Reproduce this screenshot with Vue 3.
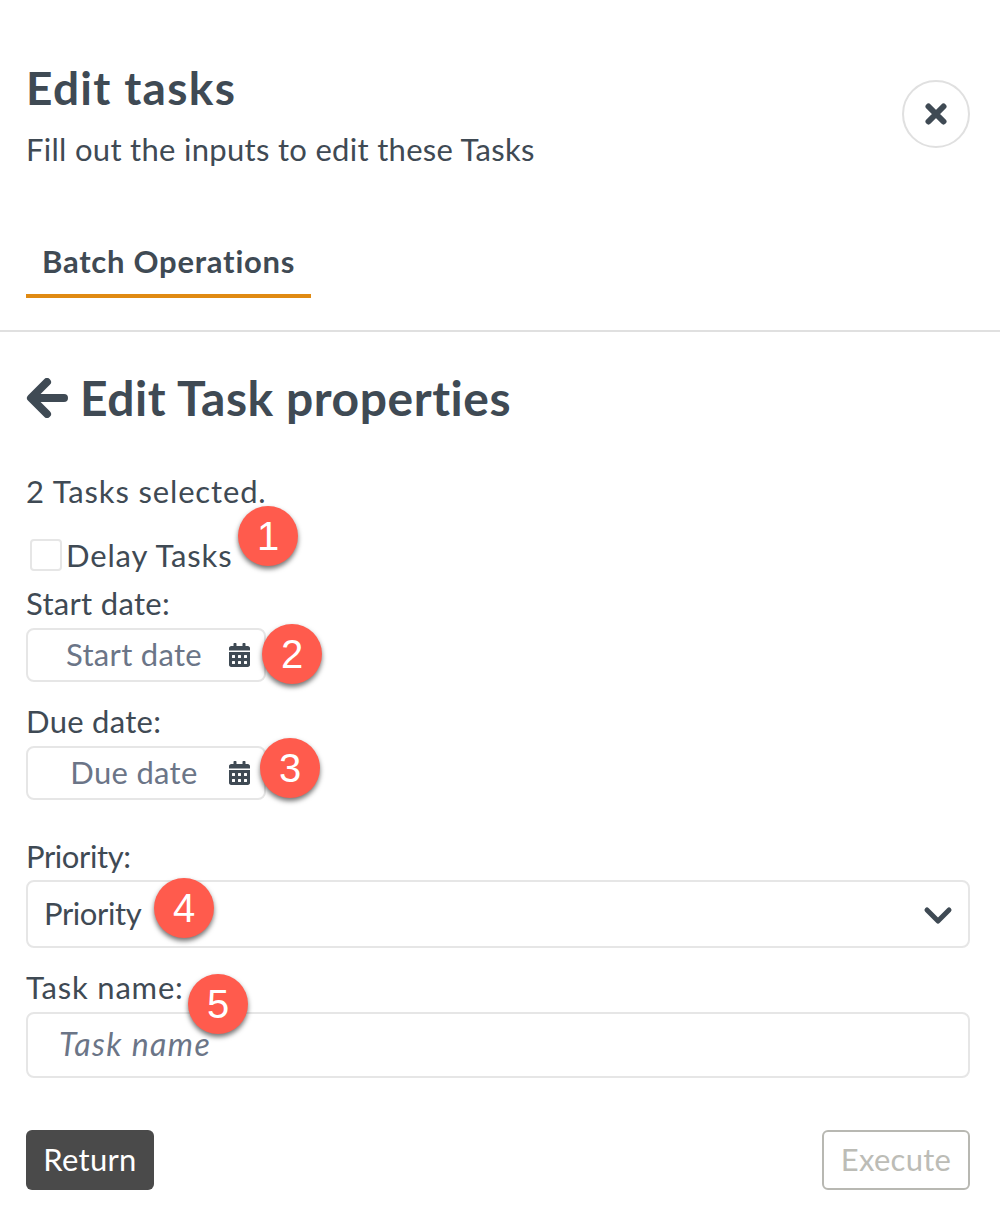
<template>
  <div class="panel">
    <header class="head">
      <div>
        <h1>Edit tasks</h1>
        <p class="sub">Fill out the inputs to edit these Tasks</p>
      </div>
      <button class="close" aria-label="Close">
        <svg width="22" height="22" viewBox="0 0 22 22">
          <path d="M3.5 3.5l15 15M18.5 3.5l-15 15" fill="none" stroke="#3f4a54" stroke-width="6" stroke-linecap="round" />
        </svg>
      </button>
    </header>

    <nav class="tabs">
      <a class="tab">Batch Operations</a>
    </nav>

    <main class="content">
      <h2>
        <svg width="42" height="40" viewBox="0 0 42 40">
          <path d="M38 20H6M21 4L5 20l16 16" fill="none" stroke="#3f4a54" stroke-width="8" stroke-linecap="round" stroke-linejoin="round" />
        </svg>
        Edit Task properties
      </h2>

      <p class="selected">2 Tasks selected.</p>

      <label class="check">
        <input type="checkbox" />
        <span>Delay Tasks</span>
      </label>

      <div class="field start">
        <label>Start date:</label>
        <div class="date">
          <input type="text" placeholder="Start date" />
          <svg width="21" height="24" viewBox="0 0 448 512">
            <path :d="calendar" fill="#3f4a54" />
          </svg>
        </div>
      </div>

      <div class="field due">
        <label>Due date:</label>
        <div class="date">
          <input type="text" placeholder="Due date" />
          <svg width="21" height="24" viewBox="0 0 448 512">
            <path :d="calendar" fill="#3f4a54" />
          </svg>
        </div>
      </div>

      <div class="field priority">
        <label>Priority:</label>
        <div class="select">
          <select>
            <option>Priority</option>
          </select>
          <svg width="30" height="20" viewBox="0 0 30 20">
            <path d="M4 4l11 11L26 4" fill="none" stroke="#3f4a54" stroke-width="5" stroke-linecap="round" stroke-linejoin="round" />
          </svg>
        </div>
      </div>

      <div class="field name">
        <label>Task name:</label>
        <input type="text" placeholder="Task name" />
      </div>

      <div class="actions">
        <button class="return">Return</button>
        <button class="execute" disabled>Execute</button>
      </div>
    </main>

    <span v-for="b in badges" :key="b.n" class="badge" :style="{ left: b.x + 'px', top: b.y + 'px' }">{{ b.n }}</span>
  </div>
</template>

<script setup>
const calendar = 'M0 464c0 26.5 21.5 48 48 48h352c26.5 0 48-21.5 48-48V192H0v272zm320-196c0-6.6 5.4-12 12-12h40c6.6 0 12 5.4 12 12v40c0 6.6-5.4 12-12 12h-40c-6.6 0-12-5.4-12-12v-40zm0 128c0-6.6 5.4-12 12-12h40c6.6 0 12 5.4 12 12v40c0 6.6-5.4 12-12 12h-40c-6.6 0-12-5.4-12-12v-40zM192 268c0-6.6 5.4-12 12-12h40c6.6 0 12 5.4 12 12v40c0 6.6-5.4 12-12 12h-40c-6.6 0-12-5.4-12-12v-40zm0 128c0-6.6 5.4-12 12-12h40c6.6 0 12 5.4 12 12v40c0 6.6-5.4 12-12 12h-40c-6.6 0-12-5.4-12-12v-40zM64 268c0-6.6 5.4-12 12-12h40c6.6 0 12 5.4 12 12v40c0 6.6-5.4 12-12 12H76c-6.6 0-12-5.4-12-12v-40zm0 128c0-6.6 5.4-12 12-12h40c6.6 0 12 5.4 12 12v40c0 6.6-5.4 12-12 12H76c-6.6 0-12-5.4-12-12v-40zM400 64h-48V16c0-8.8-7.2-16-16-16h-32c-8.8 0-16 7.2-16 16v48H160V16c0-8.8-7.2-16-16-16h-32c-8.8 0-16 7.2-16 16v48H48C21.5 64 0 85.5 0 112v48h448v-48c0-26.5-21.5-48-48-48z';

// callouts sit on top of the form, so they keep their own coordinates
const badges = [
  { n: 1, x: 238, y: 506 },
  { n: 2, x: 262, y: 624 },
  { n: 3, x: 260, y: 738 },
  { n: 4, x: 154, y: 878 },
  { n: 5, x: 188, y: 974 },
];
</script>

<style scoped>
.panel {
  position: relative;
  width: 1000px;
  height: 1220px;
  background: #fff;
  color: #3f4a54;
  font-family: Lato, "Open Sans", sans-serif;
  font-size: 31px;
  letter-spacing: 0.3px;
  font-variant-ligatures: none;
  overflow: hidden;
}

.head {
  display: flex;
  justify-content: space-between;
  align-items: flex-start;
  padding: 64px 30px 0 26px;
}

h1 {
  margin: 0;
  font-size: 46px;
  line-height: 48px;
  font-weight: 700;
  letter-spacing: 1.3px;
}

.sub {
  margin: 17px 0 0;
  line-height: 40px;
}

.close {
  width: 68px;
  height: 68px;
  margin-top: 16px;
  padding: 0;
  display: flex;
  align-items: center;
  justify-content: center;
  background: #fff;
  border: 2px solid #e0e0e0;
  border-radius: 50%;
}

.tabs {
  margin-top: 73px;
  padding: 0 0 32px 26px;
  border-bottom: 2px solid #e0e0e0;
}

.tab {
  display: inline-block;
  width: 285px;
  box-sizing: border-box;
  padding: 0 0 14px 16px;
  line-height: 38px;
  font-weight: 700;
  letter-spacing: 0.75px;
  border-bottom: 4px solid #e08a12;
}

.content {
  padding: 0 30px 0 26px;
}

h2 {
  display: flex;
  align-items: center;
  gap: 12px;
  margin: 38px 0 0;
  font-size: 48px;
  line-height: 56px;
  font-weight: 700;
  letter-spacing: 0.55px;
}

.selected {
  margin: 45px 0 0;
  line-height: 40px;
  letter-spacing: 0.85px;
}

.check {
  display: flex;
  align-items: center;
  height: 32px;
  margin: 28px 0 0 4px;
  gap: 4px;
  letter-spacing: 0.85px;
}

.check input {
  appearance: none;
  width: 32px;
  height: 32px;
  margin: 0;
  background: #fff;
  border: 2px solid #e6e6e6;
  border-radius: 4px;
}

.field label {
  display: block;
  line-height: 40px;
}

.field.start { margin-top: 12px; }
.field.due { margin-top: 19px; }
.field.priority { margin-top: 36px; }
.field.name { margin-top: 19px; }

.field.priority label { letter-spacing: -0.4px; }
.field.name label { letter-spacing: 0.8px; }

.date {
  display: flex;
  align-items: center;
  box-sizing: border-box;
  width: 240px;
  height: 54px;
  margin-top: 5px;
  background: #fff;
  border: 2px solid #e6e6e6;
  border-radius: 8px;
}

.date input {
  flex: none;
  width: 212px;
  padding: 0 0 2px;
  border: 0;
  outline: 0;
  background: transparent;
  text-align: center;
  font: inherit;
  letter-spacing: inherit;
}

/* the icon overlaps the end of the input */
.date svg {
  flex: none;
  margin-left: -11px;
}

input::placeholder {
  color: #6b7587;
  opacity: 1;
}

.select {
  position: relative;
  margin-top: 4px;
}

.select select {
  display: block;
  appearance: none;
  box-sizing: border-box;
  width: 100%;
  height: 68px;
  padding: 0 16px 2px;
  background: #fff;
  border: 2px solid #e6e6e6;
  border-radius: 8px;
  color: inherit;
  font: inherit;
  letter-spacing: -0.4px;
}

.select svg {
  position: absolute;
  right: 17px;
  top: 26px;
}

.field.name input {
  display: block;
  box-sizing: border-box;
  width: 100%;
  height: 66px;
  margin-top: 5px;
  padding: 0 31px 4px;
  background: #fff;
  border: 2px solid #e6e6e6;
  border-radius: 8px;
  font: italic 32px Lato, "Open Sans", sans-serif;
  letter-spacing: 1.4px;
}

.actions {
  display: flex;
  justify-content: space-between;
  margin-top: 52px;
}

.actions button {
  height: 60px;
  padding: 0 0 2px;
  border-radius: 6px;
  font: inherit;
  letter-spacing: inherit;
}

.return {
  width: 128px;
  background: #4a4a4a;
  border: 0;
  color: #fff;
}

.execute {
  width: 148px;
  background: #fff;
  border: 2px solid #b8b8b2;
  color: #bcbcb6;
}

.badge {
  position: absolute;
  width: 60px;
  height: 60px;
  display: flex;
  align-items: center;
  justify-content: center;
  border-radius: 50%;
  background: #ff5b4d;
  color: #fff;
  font-family: "Liberation Sans", Arial, sans-serif;
  font-size: 40px;
  letter-spacing: 0;
  box-shadow: 0 3px 5px rgba(0, 0, 0, 0.55);
}
</style>
